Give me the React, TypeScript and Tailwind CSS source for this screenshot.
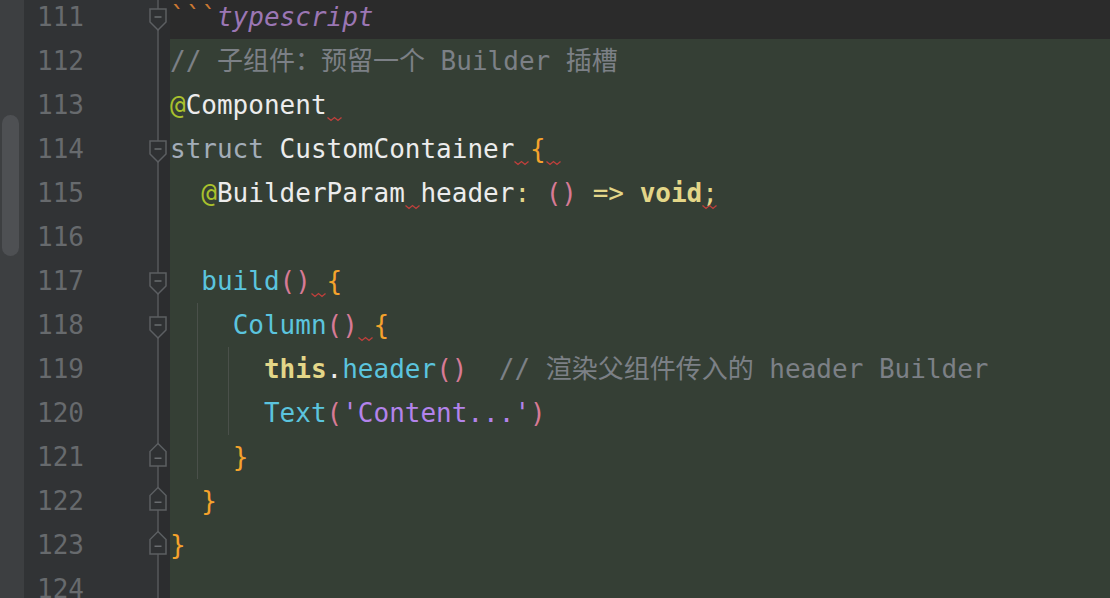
import React from "react";

type Tok = { t: string; c?: string; sq?: boolean };
type Line = {
  n: number;
  toks: Tok[];
  fold?: "start" | "end";
  dark?: boolean;
  guides?: number[];
};

const C = {
  tick: "text-[#cc7832]",
  ts: "text-[#9b76b4] italic",
  cm: "text-[#7c8086]",
  at: "text-[#a9c12d]",
  w: "text-[#ececec]",
  kw: "text-[#a3adb8]",
  br: "text-[#f5a32c]",
  pa: "text-[#d77a95]",
  y: "text-[#e3d688]",
  yb: "text-[#e3d688] font-bold",
  cy: "text-[#5bc4de]",
  str: "text-[#b383eb]",
};

const lines: Line[] = [
  { n: 111, dark: true, fold: "start", toks: [{ t: "```", c: C.tick }, { t: "typescript", c: C.ts }] },
  { n: 112, toks: [{ t: "// 子组件：预留一个 Builder 插槽", c: C.cm }] },
  { n: 113, toks: [{ t: "@", c: C.at }, { t: "Component", c: C.w }, { t: " ", sq: true }] },
  {
    n: 114,
    fold: "start",
    toks: [
      { t: "struct", c: C.kw },
      { t: " " },
      { t: "CustomContainer", c: C.w },
      { t: " ", sq: true },
      { t: "{", c: C.br },
      { t: " ", sq: true },
    ],
  },
  {
    n: 115,
    toks: [
      { t: "  " },
      { t: "@", c: C.at },
      { t: "BuilderParam", c: C.w },
      { t: " ", sq: true },
      { t: "header", c: C.w },
      { t: ":", c: C.y },
      { t: " " },
      { t: "()", c: C.pa },
      { t: " " },
      { t: "=>", c: C.y },
      { t: " " },
      { t: "void", c: C.yb },
      { t: ";", c: C.y, sq: true },
    ],
  },
  { n: 116, toks: [] },
  {
    n: 117,
    fold: "start",
    toks: [{ t: "  " }, { t: "build", c: C.cy }, { t: "()", c: C.pa }, { t: " ", sq: true }, { t: "{", c: C.br }],
  },
  {
    n: 118,
    fold: "start",
    guides: [27],
    toks: [{ t: "    " }, { t: "Column", c: C.cy }, { t: "()", c: C.pa }, { t: " ", sq: true }, { t: "{", c: C.br }],
  },
  {
    n: 119,
    guides: [27, 58],
    toks: [
      { t: "      " },
      { t: "this", c: C.yb },
      { t: ".", c: C.w },
      { t: "header", c: C.cy },
      { t: "()", c: C.pa },
      { t: "  " },
      { t: "// 渲染父组件传入的 header Builder", c: C.cm },
    ],
  },
  {
    n: 120,
    guides: [27, 58],
    toks: [
      { t: "      " },
      { t: "Text", c: C.cy },
      { t: "(", c: C.pa },
      { t: "'Content...'", c: C.str },
      { t: ")", c: C.pa },
    ],
  },
  { n: 121, fold: "end", guides: [27], toks: [{ t: "    " }, { t: "}", c: C.br }] },
  { n: 122, fold: "end", toks: [{ t: "  " }, { t: "}", c: C.br }] },
  { n: 123, fold: "end", toks: [{ t: "}", c: C.br }] },
  { n: 124, toks: [] },
];

function FoldCell({ fold }: { fold?: "start" | "end" }) {
  return (
    <svg width="21" height="44" viewBox="0 0 21 44" className="block shrink-0">
      <rect x="0" y="0" width="9" height="44" fill="#313335" />
      <rect x="9" y="0" width="12" height="44" fill="#2c2d2f" />
      <rect x="8.25" y="0" width="1.5" height="44" fill="#56585b" />
      {fold === "start" && (
        <g>
          <path d="M1 14 H17 V27 L9 35 L1 27 Z" fill="#2f3133" stroke="#5c5f62" strokeWidth="1.5" strokeLinejoin="miter" />
          <rect x="5.5" y="21.25" width="7" height="1.5" fill="#6a6d70" />
        </g>
      )}
      {fold === "end" && (
        <g>
          <path d="M9 8.5 L17 16.5 V31 H1 V16.5 Z" fill="#2f3133" stroke="#5c5f62" strokeWidth="1.5" strokeLinejoin="miter" />
          <rect x="5.5" y="22.5" width="7" height="1.5" fill="#6a6d70" />
        </g>
      )}
    </svg>
  );
}

function Squiggle() {
  return (
    <svg
      width="16"
      height="6"
      viewBox="0 0 16 6"
      className="absolute left-0 top-[33px]"
    >
      <path d="M0.5 1.5 L4 4.5 L7.5 1.5 L11 4.5 L14.5 1.5" fill="none" stroke="#c0403c" strokeWidth="1.3" />
    </svg>
  );
}

export default function App() {
  return (
    <div className="w-[1110px] h-[598px] overflow-hidden flex bg-[#353f35] font-[family-name:'DejaVu_Sans_Mono','Noto_Sans_CJK_SC',monospace] text-[26px]">
      <div className="w-[24px] shrink-0 bg-[#3d3f41] pt-[115px] pl-[2px]">
        <div className="w-[17px] h-[141px] rounded-full bg-[#4e5053]" />
      </div>
      <div className="flex-1 flex flex-col -mt-[5px]">
        {lines.map((ln) => (
          <div key={ln.n} className="flex h-[44px] shrink-0">
            <div className="w-[125px] shrink-0 bg-[#313335] pl-[13px] leading-[44px] text-[#676a6d]">
              {ln.n}
            </div>
            <FoldCell fold={ln.fold} />
            <div
              className={
                "relative flex-1 h-[44px] leading-[44px] whitespace-pre " +
                (ln.dark ? "bg-[#2b2b2b]" : "bg-[#353f35]")
              }
            >
              {(ln.guides || []).map((g) => (
                <div
                  key={g}
                  className={
                    "absolute top-0 bottom-0 w-px bg-[#4a504a] " + (g === 27 ? "left-[27px]" : "left-[58px]")
                  }
                />
              ))}
              {ln.toks.map((tk, i) =>
                tk.sq ? (
                  <span key={i} className={"relative inline-block " + (tk.c || "")}>
                    {tk.t}
                    <Squiggle />
                  </span>
                ) : (
                  <span key={i} className={tk.c || ""}>
                    {tk.t}
                  </span>
                )
              )}
            </div>
          </div>
        ))}
      </div>
    </div>
  );
}
